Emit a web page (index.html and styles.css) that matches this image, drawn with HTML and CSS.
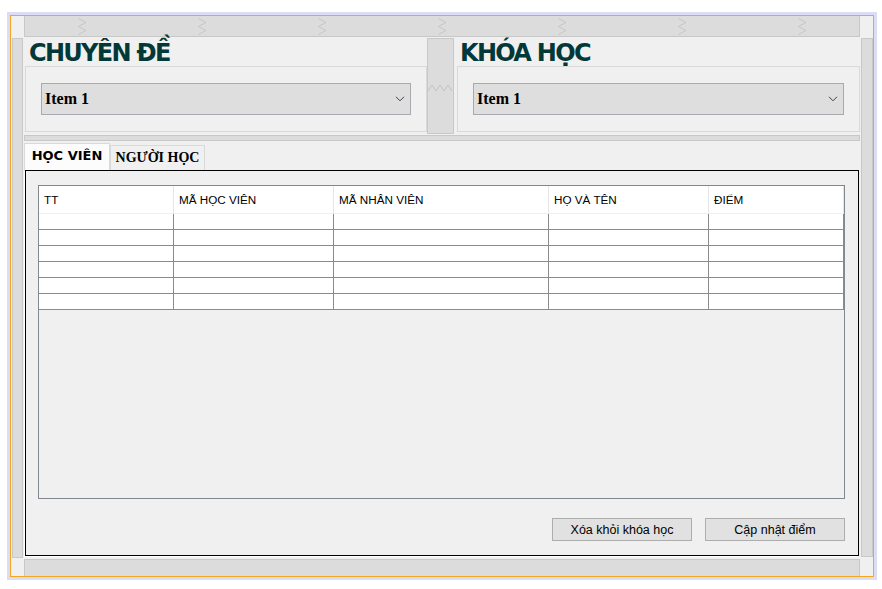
FILE: index.html
```html
<!DOCTYPE html>
<html lang="vi">
<head>
<meta charset="utf-8">
<title>Quản lý điểm</title>
<link rel="stylesheet" href="styles.css">
</head>
<body>
<div class="frame">
  <div class="window">
    <div class="corner"></div>
    <div class="hbar top">
      <svg class="zz" width="9" height="17" viewBox="0 0 9 17"><polyline points="0.5,0.5 8,4.5 0.5,8.5 8,12.5 0.5,16.5"/></svg>
      <svg class="zz" width="9" height="17" viewBox="0 0 9 17"><polyline points="0.5,0.5 8,4.5 0.5,8.5 8,12.5 0.5,16.5"/></svg>
      <svg class="zz" width="9" height="17" viewBox="0 0 9 17"><polyline points="0.5,0.5 8,4.5 0.5,8.5 8,12.5 0.5,16.5"/></svg>
      <svg class="zz" width="9" height="17" viewBox="0 0 9 17"><polyline points="0.5,0.5 8,4.5 0.5,8.5 8,12.5 0.5,16.5"/></svg>
      <svg class="zz" width="9" height="17" viewBox="0 0 9 17"><polyline points="0.5,0.5 8,4.5 0.5,8.5 8,12.5 0.5,16.5"/></svg>
      <svg class="zz" width="9" height="17" viewBox="0 0 9 17"><polyline points="0.5,0.5 8,4.5 0.5,8.5 8,12.5 0.5,16.5"/></svg>
      <svg class="zz" width="9" height="17" viewBox="0 0 9 17"><polyline points="0.5,0.5 8,4.5 0.5,8.5 8,12.5 0.5,16.5"/></svg>
    </div>
    <div class="corner"></div>

    <div class="vbar left"></div>

    <div class="main">
      <div class="header">
        <section class="topic">
          <h1 class="title">CHUYÊN ĐỀ</h1>
          <div class="topic-box">
            <div class="combo">
              <span>Item 1</span>
              <svg width="10" height="6" viewBox="0 0 10 6"><polyline points="1,0.8 5,4.8 9,0.8"/></svg>
            </div>
          </div>
        </section>
        <div class="splitter">
          <svg width="25" height="8" viewBox="0 0 25 8"><polyline points="0,7 4,1 8,7 12,1 16,7 20,1 24,7"/></svg>
        </div>
        <section class="topic topic-right">
          <h1 class="title title-right">KHÓA HỌC</h1>
          <div class="topic-box">
            <div class="combo">
              <span>Item 1</span>
              <svg width="10" height="6" viewBox="0 0 10 6"><polyline points="1,0.8 5,4.8 9,0.8"/></svg>
            </div>
          </div>
        </section>
      </div>

      <div class="sep"></div>

      <div class="tabs">
        <div class="tab tab-active">HỌC VIÊN</div>
        <div class="tab tab-other">NGƯỜI HỌC</div>
      </div>

      <div class="panel">
        <div class="table">
          <div class="grid">
            <div class="th">TT</div>
            <div class="th">MÃ HỌC VIÊN</div>
            <div class="th">MÃ NHÂN VIÊN</div>
            <div class="th">HỌ VÀ TÊN</div>
            <div class="th">ĐIỂM</div>

            <div class="td"></div><div class="td"></div><div class="td"></div><div class="td"></div><div class="td"></div>
            <div class="td"></div><div class="td"></div><div class="td"></div><div class="td"></div><div class="td"></div>
            <div class="td"></div><div class="td"></div><div class="td"></div><div class="td"></div><div class="td"></div>
            <div class="td"></div><div class="td"></div><div class="td"></div><div class="td"></div><div class="td"></div>
            <div class="td"></div><div class="td"></div><div class="td"></div><div class="td"></div><div class="td"></div>
            <div class="td"></div><div class="td"></div><div class="td"></div><div class="td"></div><div class="td"></div>
          </div>
        </div>
        <div class="actions">
          <button class="btn">Xóa khỏi khóa học</button>
          <button class="btn">Cập nhật điểm</button>
        </div>
      </div>
    </div>

    <div class="vbar right"></div>

    <div class="corner"></div>
    <div class="hbar bottom"></div>
    <div class="corner"></div>
  </div>
</div>
</body>
</html>
```

FILE: styles.css
```css
* { box-sizing: border-box; }

body {
  margin: 0;
  background: #ffffff;
  font-family: "DejaVu Sans", sans-serif;
}

.frame {
  margin: 12px 0 0 7px;
  width: 870px;
  height: 568px;
  border: 3px solid #dcdcf6;
}

.window {
  height: 100%;
  border: 1px solid #f5a51e;
  background: #f0f0f0;
  display: grid;
  grid-template-columns: 13px 836px 13px;
  grid-template-rows: 21px 521px 18px;
}

.hbar {
  background: #dcdcdc;
  border: 1px solid #c8c8c8;
}

.hbar.top {
  border-top: 0;
  display: flex;
  align-items: center;
  padding-left: 53px;
  gap: 111px;
}

.zz polyline {
  fill: none;
  stroke: #c6c6c6;
  stroke-width: 1;
}

.hbar.bottom {
  margin-top: 1px;
  border-bottom: 0;
}

.vbar {
  background: #dcdcdc;
  border: 1px solid #c8c8c8;
}

.vbar.left {
  margin: 1px 0 0 1px;
  width: 11px;
}

.vbar.right {
  margin: 1px 0 1px 1px;
  width: 12px;
}

.main {
  display: flex;
  flex-direction: column;
}

.header {
  display: flex;
  height: 98px;
}

.topic {
  width: 403px;
  padding-top: 1px;
}

.topic-right {
  width: 406px;
  padding-left: 3px;
}

.title {
  margin: 0;
  height: 28px;
  padding-left: 5px;
  font-family: "DejaVu Sans", sans-serif;
  font-weight: bold;
  font-size: 24px;
  line-height: 31px;
  letter-spacing: -1.7px;
  color: #023838;
  white-space: nowrap;
}

.title-right {
  padding-left: 3px;
}

.topic-box {
  margin-left: 1px;
  height: 66px;
  border: 1px solid #d9d9d9;
  padding: 16px 15px;
}

.topic-right .topic-box {
  margin-left: 0;
}

.combo {
  height: 32px;
  border: 1px solid #a9a9b0;
  background: #dedede;
  display: flex;
  align-items: center;
  justify-content: space-between;
  padding: 0 5px 0 3px;
  font-family: "Liberation Serif", serif;
  font-weight: bold;
  font-size: 16px;
  color: #000;
}

.combo polyline {
  fill: none;
  stroke: #404040;
  stroke-width: 1;
}

.splitter {
  width: 27px;
  height: 96px;
  margin-top: 1px;
  background: #dcdcdc;
  border: 1px solid #c8c8c8;
  padding-top: 45px;
  display: flex;
  justify-content: center;
  align-items: flex-start;
}

.splitter polyline {
  fill: none;
  stroke: #c2c2c2;
  stroke-width: 1;
}

.sep {
  height: 6px;
  background: #dcdcdc;
  border: 1px solid #c8c8c8;
}

.tabs {
  margin-top: 2px;
  height: 27px;
  display: flex;
  align-items: flex-end;
}

.tab {
  border: 1px solid #d9d9d9;
  border-bottom: 0;
  text-align: center;
  color: #000;
  white-space: nowrap;
}

.tab-active {
  width: 86px;
  height: 27px;
  background: #fcfcfc;
  padding-top: 4px;
  font-family: "DejaVu Sans", sans-serif;
  font-weight: bold;
  font-size: 13px;
}

.tab-other {
  width: 95px;
  height: 25px;
  background: #f0f0f0;
  padding-top: 4px;
  font-family: "Liberation Serif", serif;
  font-weight: bold;
  font-size: 14px;
}

.panel {
  margin: 0 1px;
  height: 386px;
  border: 1px solid #000;
  box-shadow: -1px 1px 0 #ffffff;
  padding: 14px 13px 14px 12px;
  display: flex;
  flex-direction: column;
}

.table {
  height: 314px;
  border: 1px solid #828790;
  background: #f0f0f0;
}

.grid {
  display: grid;
  grid-template-columns: 135px 160px 215px 160px 135px;
  background: #ffffff;
}

.th {
  height: 28px;
  border-right: 1px solid #e5e5e5;
  border-bottom: 1px solid #efefef;
  padding-left: 5px;
  display: flex;
  align-items: center;
  font-family: "Liberation Sans", sans-serif;
  font-size: 11.7px;
  color: #000;
}

.td {
  height: 16px;
  border-right: 1px solid #8c8c8c;
  border-bottom: 1px solid #8c8c8c;
}

.actions {
  margin-top: 19px;
  display: flex;
  justify-content: flex-end;
  gap: 13px;
}

.btn {
  width: 140px;
  height: 23px;
  margin: 0;
  padding: 0;
  border: 1px solid #adadad;
  background: #e1e1e1;
  font-family: "Liberation Sans", sans-serif;
  font-size: 12.5px;
  color: #000;
  text-align: center;
}
```
